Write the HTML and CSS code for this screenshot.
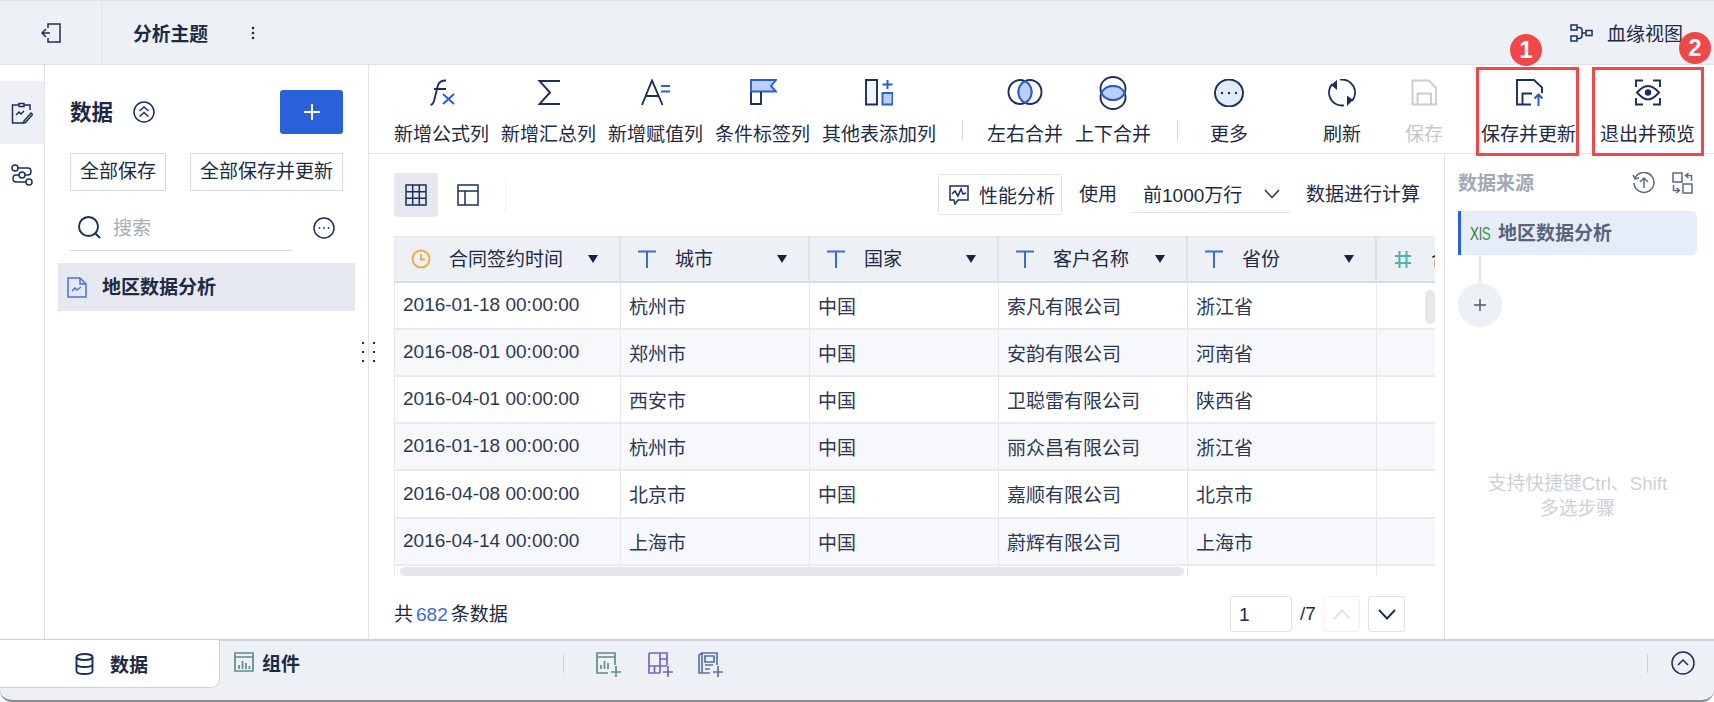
FILE: index.html
```html
<!DOCTYPE html>
<html lang="zh-CN">
<head>
<meta charset="utf-8">
<title>分析主题</title>
<link rel="stylesheet" href="styles.css">
</head>
<body>
<div class="app">
  <header class="topbar">
    <div class="back">
      <svg class="ico thin" width="20" height="20" viewBox="0 0 20 20"><path d="M7 5V1h12v18H7v-4M9 10H1M5 6l-4 4 4 4"/></svg>
    </div>
    <div class="title">分析主题</div>
    <svg class="kebab" width="4" height="14" viewBox="0 0 4 14"><circle cx="2" cy="2" r="1.3"/><circle cx="2" cy="7" r="1.3"/><circle cx="2" cy="12" r="1.3"/></svg>
    <div class="lineage">
      <svg class="ico thin" width="23" height="18" viewBox="0 0 23 18"><path d="M1 1h6v5H1zM1 12h6v5H1zM16 6.500h6v5h-6zM7 3.500h2c2 0 3 1 3 3v5c0 2-1 3-3 3H7M12 9h4"/></svg>
      <span>血缘视图</span>
    </div>
  </header>

  <div class="main">
    <nav class="rail">
      <div class="rail-item active">
        <svg class="ico thin" width="22" height="22" viewBox="0 0 22 22"><path d="M8 1.500h5v3H8zM8 3H1.500v18H12M13 3h6v5M5 13l3-3 2 2 3-3M13 19l7-8 1.500 1.500-7 8-2 .5z"/></svg>
      </div>
      <div class="rail-item">
        <svg class="ico thin" width="22" height="22" viewBox="0 0 22 22"><circle cx="4" cy="4" r="3"/><circle cx="11" cy="11" r="3"/><circle cx="18" cy="18" r="3"/><path d="M7 4h10c4 0 4 7 0 7h-3M8 11H5c-4 0-4 7 0 7h10"/></svg>
      </div>
    </nav>

    <aside class="panel">
      <div class="panel-head">
        <span class="panel-title">数据</span>
        <svg class="ico thin collapse" width="22" height="22" viewBox="0 0 22 22"><circle cx="11" cy="11" r="10"/><path d="M6.500 10l4.500-4 4.500 4M6.500 15.500l4.500-4 4.500 4"/></svg>
        <button class="add" type="button"><svg width="18" height="18" viewBox="0 0 18 18"><path d="M9 1v16M1 9h16"/></svg></button>
      </div>
      <div class="save-row">
        <button class="save-btn" type="button">全部保存</button>
        <button class="save-btn" type="button">全部保存并更新</button>
      </div>
      <div class="search-row">
        <div class="search">
          <svg class="ico" width="23" height="23" viewBox="0 0 23 23"><circle cx="10.500" cy="10.500" r="9.500"/><path d="M17.500 17.500l4.500 4.500"/></svg>
          <span>搜索</span>
        </div>
        <svg class="ico thin" width="22" height="22" viewBox="0 0 22 22"><circle cx="11" cy="11" r="10"/><circle class="dot" cx="6.500" cy="11" r=".9"/><circle class="dot" cx="11" cy="11" r=".9"/><circle class="dot" cx="15.500" cy="11" r=".9"/></svg>
      </div>
      <div class="list-item">
        <svg class="doc" width="20" height="21" viewBox="0 0 20 21"><path d="M1 1h12l6 6v13H1zM13 1v6h6M5 14l3-3 2 2 4-3"/></svg>
        <span>地区数据分析</span>
      </div>
      <div class="grip"><i></i><i></i><i></i><i></i><i></i><i></i></div>
    </aside>

    <section class="center">
      <div class="toolbar">
        <div class="tool">
          <svg class="ico" width="28" height="28" viewBox="0 0 28 28"><path d="M2.500 26C4 26 5 25 6 22l4-16c1-3 3-4.500 8-4.500M6 10h12"/><path class="blue" d="M15 15l11 10M26 15L15 25"/></svg>
          <span>新增公式列</span>
        </div>
        <div class="tool">
          <svg class="ico" width="28" height="28" viewBox="0 0 28 28"><path d="M25 2H4.500L15 13.500 4.500 25H25"/></svg>
          <span>新增汇总列</span>
        </div>
        <div class="tool">
          <svg class="ico" width="30" height="28" viewBox="0 0 30 28"><path d="M1 26L11 1.500 21.500 26M5 17h13"/><path class="blue" d="M20 7h9M20 12.500h9"/></svg>
          <span>新增赋值列</span>
        </div>
        <div class="tool">
          <svg class="ico" width="28" height="28" viewBox="0 0 28 28"><path class="flag" d="M2 1h25l-5 6 5 5.500H2z"/><path d="M2 13v12h10V13"/></svg>
          <span>条件标签列</span>
        </div>
        <div class="tool wide">
          <svg class="ico" width="28" height="28" viewBox="0 0 28 28"><path class="pale" d="M1 1h11v24.500H1z"/><path class="flag" d="M17.500 14h10v11.500h-10z"/><path class="blue" d="M22.500 1v9M17.500 5.500h10"/></svg>
          <span>其他表添加列</span>
        </div>
        <div class="tool-sep first"></div>
        <div class="tool four">
          <svg class="ico" width="36" height="28" viewBox="0 0 36 28"><ellipse cx="13" cy="13" rx="11.500" ry="12"/><ellipse cx="23" cy="13" rx="11.500" ry="12"/><path class="flag" d="M18 2.200c4 2.300 6.500 5.800 6.500 10.800S22 21.500 18 23.800C14 21.500 11.500 18 11.500 13S14 4.500 18 2.200z"/></svg>
          <span>左右合并</span>
        </div>
        <div class="tool four">
          <svg class="ico tall" width="28" height="34" viewBox="0 0 28 34"><ellipse cx="14" cy="12.500" rx="12.500" ry="11.500"/><ellipse cx="14" cy="21.500" rx="12.500" ry="11.500"/><path class="flag" d="M2.400 17C5 12 9 10 14 10s9 2 11.600 7C23 22 19 24 14 24s-9-2-11.600-7z"/></svg>
          <span>上下合并</span>
        </div>
        <div class="tool-sep second"></div>
        <div class="tool two more">
          <svg class="ico" width="30" height="28" viewBox="0 0 30 28"><ellipse class="soft" cx="15" cy="14" rx="14" ry="13.500"/><circle class="dot" cx="8" cy="14" r="1.200"/><circle class="dot" cx="15" cy="14" r="1.200"/><circle class="dot" cx="22" cy="14" r="1.200"/></svg>
          <span>更多</span>
        </div>
        <div class="tool two refresh">
          <svg class="ico" width="30" height="28" viewBox="0 0 30 28"><path d="M5 5.200A13 13 0 0 0 17 26.350M13 .65A13 13 0 0 1 25 21.800"/><path class="fill" d="M10 1v10L4 6zM20 16.500V27l6-6z"/></svg>
          <span>刷新</span>
        </div>
        <div class="tool two disabled">
          <svg class="ico" width="28" height="28" viewBox="0 0 28 28"><path d="M2.500 1.500H19L26 9v16.500H2.500zM7.500 25V14.500H21V25"/></svg>
          <span>保存</span>
        </div>
        <div class="tool marked one">
          <svg class="ico" width="28" height="28" viewBox="0 0 28 28"><path d="M16 25.500H2V1h17l8 7.500V14M7.500 25V14.500H17"/><path class="blue" d="M23.500 27V15.500M19.500 19.500l4-4 4 4"/></svg>
          <span>保存并更新</span>
          <i class="mark"></i><b class="badge">1</b>
        </div>
        <div class="tool marked two-mark">
          <svg class="ico" width="28" height="28" viewBox="0 0 28 28"><path d="M2 8V1.500h7M19 1.500h7V8M26 19v6.500h-7M9 25.500H2V19M3 13.500C7 9 10 7 14 7s7 2 11 6.500C21 18 18 20.500 14 20.500S7 18 3 13.500z"/><circle class="fill" cx="14" cy="13.500" r="3.200"/></svg>
          <span>退出并预览</span>
          <i class="mark"></i><b class="badge">2</b>
        </div>
      </div>

      <div class="body">
        <div class="content">
          <div class="opts">
            <button class="view on" type="button">
              <svg class="ico thin" width="22" height="22" viewBox="0 0 22 22"><path d="M1 1h20v20H1zM1 7.700h20M1 14.300h20M7.700 1v20M14.300 1v20"/></svg>
            </button>
            <button class="view" type="button">
              <svg class="ico thin" width="22" height="22" viewBox="0 0 22 22"><path d="M1 1h20v20H1zM1 7h20M8 7v14"/></svg>
            </button>
            <div class="opt-sep"></div>
            <button class="perf" type="button">
              <svg class="ico thin" width="20" height="20" viewBox="0 0 20 20"><path d="M1 1h18v14H9l-3 4-1-4H1zM3 9l3-3 3 5 3-7 2 5 3-1"/></svg>
              <span>性能分析</span>
            </button>
            <span class="use">使用</span>
            <div class="dropdown"><span>前1000万行</span>
              <svg class="ico thin" width="16" height="10" viewBox="0 0 16 10"><path d="M1 1l7 7.500L15 1"/></svg>
            </div>
            <span class="calc">数据进行计算</span>
          </div>

          <div class="table-wrap">
            <table class="grid">
              <colgroup><col class="c1"><col class="cn"><col class="cn"><col class="cn"><col class="cn"><col class="cn"></colgroup>
              <thead>
                <tr>
                  <th><div class="th"><svg class="clock" width="20" height="20" viewBox="0 0 20 20"><circle cx="10" cy="10" r="8.500"/><path d="M10 5v5.500h4"/></svg><span>合同签约时间</span><i class="tri"></i></div></th>
                  <th><div class="th"><svg class="t" width="20" height="20" viewBox="0 0 20 20"><path d="M1 2.500h18M10 2.500V19"/></svg><span>城市</span><i class="tri"></i></div></th>
                  <th><div class="th"><svg class="t" width="20" height="20" viewBox="0 0 20 20"><path d="M1 2.500h18M10 2.500V19"/></svg><span>国家</span><i class="tri"></i></div></th>
                  <th><div class="th"><svg class="t" width="20" height="20" viewBox="0 0 20 20"><path d="M1 2.500h18M10 2.500V19"/></svg><span>客户名称</span><i class="tri"></i></div></th>
                  <th><div class="th"><svg class="t" width="20" height="20" viewBox="0 0 20 20"><path d="M1 2.500h18M10 2.500V19"/></svg><span>省份</span><i class="tri"></i></div></th>
                  <th><div class="th"><svg class="hash" width="20" height="20" viewBox="0 0 20 20"><path d="M6.500 2v17M13.500 2v17M2 7h16M2 14h16"/></svg><span>合同金额</span><i class="tri"></i></div></th>
                </tr>
              </thead>
              <tbody>
                <tr><td>2016-01-18 00:00:00</td><td>杭州市</td><td>中国</td><td>索凡有限公司</td><td>浙江省</td><td></td></tr>
                <tr><td>2016-08-01 00:00:00</td><td>郑州市</td><td>中国</td><td>安韵有限公司</td><td>河南省</td><td></td></tr>
                <tr><td>2016-04-01 00:00:00</td><td>西安市</td><td>中国</td><td>卫聪雷有限公司</td><td>陕西省</td><td></td></tr>
                <tr><td>2016-01-18 00:00:00</td><td>杭州市</td><td>中国</td><td>丽众昌有限公司</td><td>浙江省</td><td></td></tr>
                <tr><td>2016-04-08 00:00:00</td><td>北京市</td><td>中国</td><td>嘉顺有限公司</td><td>北京市</td><td></td></tr>
                <tr><td>2016-04-14 00:00:00</td><td>上海市</td><td>中国</td><td>蔚辉有限公司</td><td>上海市</td><td></td></tr>
                <tr><td></td><td></td><td></td><td></td><td></td><td></td></tr>
              </tbody>
            </table>
            <div class="vbar"></div>
            <div class="hbar"></div>
          </div>

          <div class="pager">
            <div class="count">共<em>682</em>条数据</div>
            <div class="page-input">1</div>
            <span class="page-total">/7</span>
            <button class="page-btn off" type="button"><svg class="ico thin" width="18" height="11" viewBox="0 0 18 11"><path d="M1 10l8-8.500 8 8.500"/></svg></button>
            <button class="page-btn" type="button"><svg class="ico" width="18" height="11" viewBox="0 0 18 11"><path d="M1 1l8 8.500L17 1"/></svg></button>
          </div>
        </div>

        <aside class="source">
          <div class="source-head">
            <span>数据来源</span>
            <svg class="gray-ico" width="23" height="22" viewBox="0 0 23 22"><path d="M3 6a10 10 0 1 1-1 5M1 3l2 4 4-1M12 16V6M8 10l4-4 4 4"/></svg>
            <svg class="gray-ico" width="21" height="22" viewBox="0 0 21 22"><path d="M1 1h9v9H1zM11 12h9v9h-9zM19.500 9V3.500H14M16.500 1l-3 2.500 3 2.500M1.500 13v5.500H7M4.500 21l3-2.500-3-2.500"/></svg>
          </div>
          <div class="source-card">
            <span class="xls"><b>X</b><i>l</i><b>S</b></span>
            <span class="source-name">地区数据分析</span>
          </div>
          <div class="link"></div>
          <button class="source-add" type="button"><svg width="14" height="14" viewBox="0 0 14 14"><path d="M7 1v12M1 7h12"/></svg></button>
          <p class="hint">支持快捷键Ctrl、Shift<br>多选步骤</p>
        </aside>
      </div>
    </section>
  </div>

  <footer class="bottom">
    <div class="tab active">
      <svg class="ico" width="19" height="22" viewBox="0 0 19 22"><ellipse cx="9.500" cy="4" rx="8" ry="3"/><path d="M1.500 4v14c0 4 16 4 16 0V4M1.500 11c0 4 16 4 16 0"/></svg>
      <span>数据</span>
    </div>
    <div class="tab comp">
      <svg class="chart" width="20" height="20" viewBox="0 0 20 20"><path d="M1 1h18v18H1zM1 5h18M5 17v-4M8.500 17V9M12 17v-6M15.500 17v-3"/></svg>
      <span>组件</span>
    </div>
    <div class="bar-sep left"></div>
    <svg class="chart add-ico" width="25" height="26" viewBox="0 0 25 26"><path d="M19 13V1H1v20h11M1 5h18M5 17v-4M8.500 17V9M12 17v-6M20 14v11M15 20h10"/></svg>
    <svg class="chart add-ico purple" width="25" height="26" viewBox="0 0 25 26"><path d="M1 1h18v12M12 21H1V1M1 14h18M12 1v13M6.500 14v7M12 14v7M12 7h7M20 14v11M15 20h10"/></svg>
    <svg class="chart add-ico indigo" width="25" height="26" viewBox="0 0 25 26"><path d="M4 1h15v12M12 21H1V3l3-2v20M7 4h9v6H7zM7 13h8M7 17h5M20 14v11M15 20h10"/></svg>
    <div class="bar-sep right"></div>
    <svg class="ico thin up" width="24" height="24" viewBox="0 0 24 24"><circle cx="12" cy="12" r="11"/><path d="M7 14l5-5 5 5"/></svg>
  </footer>
</div>
</body>
</html>
```

FILE: styles.css
```css
* { box-sizing: border-box; }
html, body { margin: 0; height: 100%; background: #fff; }
body { font-family: "Liberation Sans", "Noto Sans CJK SC", sans-serif; font-size: 19px; color: #1c2a45; overflow: hidden; }
button { font: inherit; color: inherit; background: none; border: 0; padding: 0; }
em, i { font-style: normal; }

.ico { fill: none; stroke: #1b2f5e; stroke-width: 1.900; flex: none; display: block; }
.ico.thin { stroke-width: 1.500; }
.ico .blue { stroke: #2b5fce; stroke-width: 2; }
.ico .flag { fill: #b9d0fa; stroke: #2b5fce; }
.ico .pale { fill: #f2f6fd; }
.ico .soft { fill: #e2ebfb; }
.ico .fill, .ico .dot { fill: #1b2f5e; stroke: none; }

.app { width: 1714px; height: 702px; display: flex; flex-direction: column; }

/* top bar */
.topbar { height: 65px; flex: none; display: flex; align-items: center; background: #edf0f5; border-top: 1px solid #dfe2e6; border-bottom: 1px solid #dfe2e8; }
.back { width: 102px; height: 100%; flex: none; display: flex; align-items: center; padding-left: 41px; border-right: 1px solid #e0e3ea; }
.title { margin-left: 31px; font-size: 18.800px; font-weight: 700; }
.kebab { margin-left: 43px; fill: #1c2a45; }
.lineage { margin-left: auto; margin-right: 31px; display: flex; align-items: center; gap: 14px; }

/* main row */
.main { flex: 1; min-height: 0; display: flex; }
.rail { width: 45px; flex: none; padding-top: 16px; border-right: 1px solid #e0e3ea; }
.rail-item { height: 63px; display: flex; align-items: center; justify-content: center; padding-right: 1px; }
.rail-item.active { background: #edf0f5; }
.rail-item + .rail-item { height: 62px; }

/* data panel */
.panel { width: 324px; flex: none; position: relative; padding: 25px 25px 0; border-right: 1px solid #e0e3ea; }
.panel-head { height: 44px; display: flex; align-items: center; }
.panel-title { font-size: 21.500px; font-weight: 700; padding-bottom: 4px; }
.collapse { margin-left: 20px; }
.add { margin-left: auto; width: 63px; height: 44px; border-radius: 3px; background: #2b60db; display: flex; align-items: center; justify-content: center; }
.add svg { fill: none; stroke: #fff; stroke-width: 2; }
.save-row { margin-top: 19px; display: flex; justify-content: space-between; }
.save-btn { height: 38px; padding: 0 9px; border: 1px solid #d8dbe3; line-height: 34px; white-space: nowrap; }
.search-row { margin-top: 14px; display: flex; align-items: center; justify-content: space-between; }
.search { width: 222px; height: 46px; display: flex; align-items: center; gap: 12px; padding-left: 8px; border-bottom: 1px solid #d8dbe3; color: #a7adba; }
.search span { padding-bottom: 2px; }
.search-row > .ico { margin-right: 8px; }
.list-item { margin: 12px -12px 0 -12px; height: 48px; display: flex; align-items: center; gap: 15px; padding-left: 9px; background: #e6e9f0; font-weight: 700; }
.list-item span { padding-bottom: 4px; }
.doc { fill: none; stroke: #4f6fe0; stroke-width: 1.500; flex: none; }
.grip { position: absolute; right: -7px; top: 277px; width: 13px; display: grid; grid-template-columns: 2px 2px; gap: 7px 9px; }
.grip i { width: 2px; height: 2px; background: #1c2a45; }

/* toolbar */
.center { flex: 1; min-width: 0; display: flex; flex-direction: column; }
.toolbar { height: 89px; flex: none; display: flex; padding-left: 25px; border-bottom: 1px solid #e3e6ec; }
.tool { position: relative; width: 95px; margin-right: 12px; display: flex; flex-direction: column; align-items: center; white-space: nowrap; padding-top: 14px; }
.tool .ico { height: 28px; }
.tool .ico.tall { height: 34px; margin-top: -3px; margin-bottom: -3px; }
.tool span { margin-top: 14px; line-height: 28px; }
.tool.wide { width: 114px; margin-right: 0; }
.tool.four { width: 76px; }
.tool.two { width: 38px; margin-right: 0; }
.tool.more { margin-left: 32px; }
.tool.refresh { margin-left: 75px; }
.tool.disabled { margin-left: 44px; color: #c4c8d0; }
.tool.disabled .ico { stroke: #c9cdd6; }
.tool.one { margin-left: 38px; margin-right: 24px; }
.tool.two-mark { margin-right: 0; }
.tool-sep { width: 1px; height: 20px; margin-top: 55px; background: #d3d6dd; flex: none; }
.tool-sep.first { margin-left: 26px; margin-right: 24px; }
.tool-sep.second { margin-left: 14px; }
.mark { position: absolute; left: -5px; right: -3px; top: 2px; height: 89px; border: 3px solid #f04848; }
.two-mark .mark { left: -8px; right: -9px; }
.badge { position: absolute; left: 29px; top: -31px; width: 32px; height: 32px; border-radius: 50%; background: #f04848; color: #fff; font-size: 24px; line-height: 32px; text-align: center; }
.two-mark .badge { left: 79px; top: -33px; }

/* content */
.body { flex: 1; min-height: 0; display: flex; }
.content { width: 1075px; flex: none; padding-left: 25px; padding-right: 9px; }
.opts { height: 82px; padding-top: 19px; display: flex; align-items: flex-start; }
.view { width: 44px; height: 44px; border-radius: 4px; display: flex; align-items: center; justify-content: center; margin-right: 8px; }
.view.on { background: #e6e8ed; }
.opt-sep { width: 1px; height: 32px; margin: 6px 0 0 7px; background: #edf0f5; }
.perf { margin-left: 432px; margin-top: 1px; width: 124px; height: 41px; display: flex; align-items: center; gap: 10px; padding-left: 10px; border: 1px solid #e0e3ea; border-radius: 3px; white-space: nowrap; }
.use { margin-left: 17px; line-height: 44px; }
.dropdown { margin-left: 15px; width: 158px; height: 40px; display: flex; align-items: center; justify-content: space-between; padding: 2px 10px 0 11px; border-bottom: 1px solid #dfe2e9; white-space: nowrap; }
.calc { margin-left: 16px; line-height: 44px; white-space: nowrap; }

.table-wrap { position: relative; width: 1041px; height: 340px; overflow: hidden; }
.grid { width: 1172px; table-layout: fixed; border-collapse: separate; border-spacing: 0; }
.c1 { width: 227px; }
.cn { width: 189px; }
.grid th { height: 47px; padding: 0; background: #edf0f5; border-bottom: 2px solid #d8dbe4; border-right: 2px solid #dfe2e9; border-top: 1px solid #e3e6ec; font-weight: 400; text-align: left; }
.grid th:first-child, .grid td:first-child { border-left: 1px solid #e6e8f0; }
.th { display: flex; align-items: center; padding: 0 21px 0 16px; white-space: nowrap; }
.th svg { flex: none; fill: none; stroke-width: 2; }
.th span { margin-left: 18px; padding-bottom: 4px; }
.tri { margin-left: auto; width: 0; height: 0; border-left: 5.500px solid transparent; border-right: 5.500px solid transparent; border-top: 8px solid #17233f; }
.clock { stroke: #f0ad44; }
.t { stroke: #3d6bd8; }
.hash { stroke: #4ab5a5; }
.grid td { height: 47px; padding: 0 0 1px 8px; border-bottom: 2px solid #e8eaf1; border-right: 1px solid #e6e8f0; white-space: nowrap; overflow: hidden; color: #2c3853; }
.grid tbody tr:nth-child(5) td { height: 48px; }
.grid tbody tr:nth-child(even) td { background: #f7f8fc; }
.grid tbody tr:last-child td { background: #fff; }
.vbar { position: absolute; top: 54px; right: 0; width: 10px; height: 34px; border-radius: 5px; background: #e6e7e9; }
.hbar { position: absolute; left: 6px; bottom: 0; width: 784px; height: 9px; border-radius: 5px; background: #e6e7e9; }

.pager { margin-top: 20px; height: 36px; display: flex; align-items: center; }
.count { padding-bottom: 4px; }
.count em { color: #3d6bd8; margin: 0 3px; }
.page-input { margin-left: auto; width: 62px; height: 36px; padding-left: 8px; line-height: 36px; border: 1px solid #dfe2e9; border-radius: 3px; }
.page-total { margin-left: 8px; width: 23px; }
.page-btn { width: 37px; height: 36px; border: 1px solid #dfe2e9; border-radius: 3px; margin-left: 8px; display: flex; align-items: center; justify-content: center; }
.page-btn.off { margin-left: 0; border-color: #edf0f5; }
.page-btn.off .ico { stroke: #d8dbe2; }
.pager .page-btn:last-child { margin-right: 30px; }

/* source panel */
.source { flex: 1; min-width: 0; padding: 18px 17px 0 13px; border-left: 1px solid #e0e3ea; }
.source-head { height: 22px; display: flex; align-items: center; color: #a2a8b5; font-weight: 700; }
.source-head span { padding-bottom: 4px; }
.gray-ico { fill: none; stroke: #5b6b80; stroke-width: 1.500; flex: none; }
.source-head .gray-ico:nth-of-type(1) { margin-left: auto; margin-right: 17px; }
.source-head .gray-ico:nth-of-type(2) { margin-right: 4px; }
.source-card { margin-top: 17px; height: 44px; display: flex; align-items: center; gap: 7px; padding-left: 9px; background: #e5edfb; border-left: 3px solid #2b60db; border-radius: 0 6px 6px 0; color: #5a6478; font-weight: 700; }
.source-name { padding-bottom: 4px; }
.xls { display: block; width: 21px; font-size: 19px; font-weight: 400; color: #4c6b5a; line-height: 1; white-space: nowrap; transform: scaleX(.7); transform-origin: left center; }
.xls b { font-weight: 400; color: #2f7d1f; }
.xls b:last-child { color: #27a03a; }
.link { width: 2px; height: 28px; margin-left: 21px; background: #e3e5ea; }
.source-add { width: 44px; height: 44px; border-radius: 50%; background: #edf0f5; display: flex; align-items: center; justify-content: center; }
.source-add svg { fill: none; stroke: #4a5670; stroke-width: 1.500; }
.hint { margin: 144px 0 0; text-align: center; font-size: 18.800px; line-height: 25px; color: #cdd0d6; }

/* bottom bar */
.bottom { height: 63px; flex: none; display: flex; align-items: flex-start; position: relative; background: #edf0f5; border-top: 2px solid #cdd1db; border-bottom: 2px solid #8c8d90; border-radius: 0 0 12px 12px; }
.tab { display: flex; align-items: center; font-weight: 700; white-space: nowrap; }
.tab.active { width: 220px; height: 48px; gap: 16px; padding-left: 75px; background: #fff; border: 1px solid #cdd1db; border-width: 0 1px 1px 0; border-radius: 0 0 9px 0; margin-top: -1px; }
.tab.comp { margin-left: 14px; height: 42px; gap: 8px; }
.chart { fill: none; stroke: #5f8f87; stroke-width: 1.700; flex: none; }
.bar-sep { width: 1px; height: 19px; background: #cdd0d6; flex: none; margin-top: 13px; }
.bar-sep.left { margin-left: 263px; }
.add-ico { margin-top: 11px; margin-left: 32px; }
.add-ico.purple { margin-left: 27px; stroke: #7565c0; }
.add-ico.indigo { margin-left: 25px; stroke: #5a6fb0; }
.bar-sep.right { margin-left: auto; }
.up { margin: 10px 19px 0 23px; }
```
